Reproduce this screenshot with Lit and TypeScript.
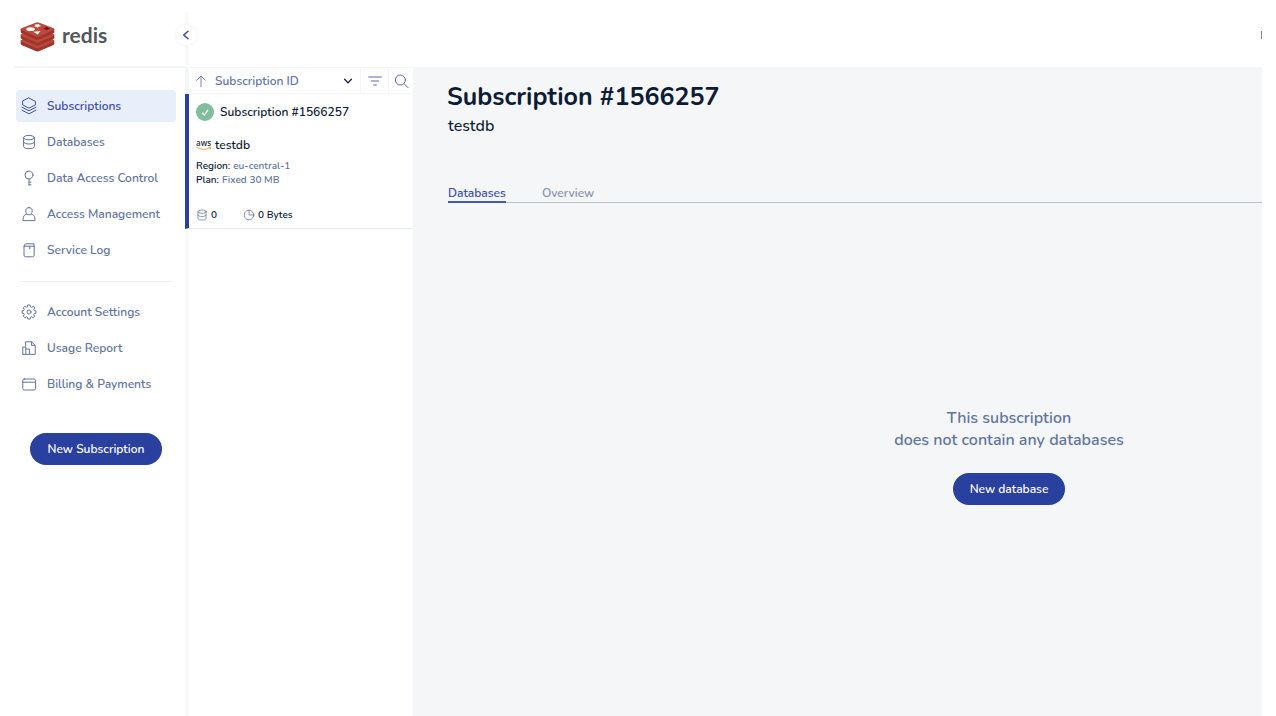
import { LitElement, html, css, svg, TemplateResult } from "lit";
import { customElement, property, state } from "lit/decorators.js";
import { classMap } from "lit/directives/class-map.js";

const icons: Record<string, TemplateResult> = {
  layers: svg`<path d="M8 0 14.4 3.4V6.8L8 10.2 1.6 6.8V3.4Z"/><path d="M1 9.2 8 12.8 15 9.2M1 12.2 8 15.8 15 12.2"/>`,
  database: svg`<ellipse cx="8" cy="3.6" rx="5.4" ry="2.2"/><path d="M2.6 3.6V12.6C2.6 15.4 13.4 15.4 13.4 12.6V3.6M2.6 8C2.6 10.8 13.4 10.8 13.4 8"/>`,
  key: svg`<circle cx="8" cy="5" r="4"/><path d="M8 9V15.2M8 12.2H10M8 14.8H10"/>`,
  user: svg`<path d="M8 1.6C5.8 1.6 4.8 3 4.8 5 4.8 7 6.2 8.9 8 8.9S11.2 7 11.2 5C11.2 3 10.2 1.6 8 1.6ZM5.6 8.2C3 9 2.2 10 2 14.6H14C13.8 10 13 9 10.4 8.2"/>`,
  log: svg`<path d="M3 4.6V13Q3 14.8 4.6 14.8H11.6Q13.2 14.8 13.2 13V4.6Z"/><path d="M3 4.6Q3 1.8 5 1.8H13V4.6M8.8 4.6V6.6"/>`,
  gear: svg`<circle cx="8" cy="8" r="2"/><path d="M6.9 1H9.1L9.7 3.1 10.5 3.4 12.4 2.4 13.9 3.9 12.7 5.6 13.1 6.5 15 6.9V9.1L13.1 9.6 12.7 10.5 13.7 12.3 12.2 13.8 10.5 12.7 9.6 13.1 9.1 15H6.9L6.4 13.1 5.5 12.7 3.8 13.8 2.2 12.2 3.3 10.5 2.9 9.6 1 9.1V6.9L2.9 6.4 3.3 5.5 2.2 3.8 3.8 2.2 5.5 3.3 6.4 2.9Z"/>`,
  report: svg`<path d="M4.6 6V1.8H10.4L14.2 5.4V14.4H9M10.4 1.8V5.4H14.2M1.8 14.4V7H4.8V14.4M4.8 9H8.4V14.4H1.8"/>`,
  card: svg`<rect x="1.8" y="3" width="12.8" height="11" rx="1.6"/><path d="M1.8 6.2H14.6"/>`,
  up: svg`<path d="M8 14.6V2.4M3.2 7.2 8 2.2 12.8 7.2"/>`,
  filter: svg`<path d="M1.6 4H14.4M4.4 8H11.6M6.6 12H9.4"/>`,
  search: svg`<circle cx="7.4" cy="7" r="5"/><path d="M11.2 10.8 15 14.6"/>`,
  pie: svg`<circle cx="8" cy="8" r="6.4"/><path d="M8 1.6V8H14.4"/>`,
  left: svg`<path d="M10.6 3 5 8 10.6 13"/>`,
  down: svg`<path d="M2.6 5.2 8 11 13.4 5.2"/>`,
};

@customElement("line-icon")
class LineIcon extends LitElement {
  @property() name = "";
  static styles = css`
    :host { display: inline-flex; width: 16px; height: 16px; flex: none; }
    svg { width: 100%; height: 100%; overflow: visible; fill: none; stroke: currentColor; stroke-width: var(--stroke, 1); stroke-linejoin: round; stroke-linecap: round; }
  `;
  render() {
    return html`<svg viewBox="0 0 16 16" aria-hidden="true">${icons[this.name]}</svg>`;
  }
}

const primaryNav = [
  ["layers", "Subscriptions"],
  ["database", "Databases"],
  ["key", "Data Access Control"],
  ["user", "Access Management"],
  ["log", "Service Log"],
];
const accountNav = [
  ["gear", "Account Settings"],
  ["report", "Usage Report"],
  ["card", "Billing & Payments"],
];

@customElement("app-root")
class AppRoot extends LitElement {
  @state() private tab = "Databases";

  static styles = css`
    :host {
      --navy: #0d1b36; --slate: #63759c; --blue: #2a409f; --line: #f5f6f8;
      display: block; font-family: Nunito, "Noto Sans", sans-serif; font-size: 12px; font-weight: 600; line-height: 16px; color: var(--navy); background: #fff;
    }
    * { box-sizing: border-box; }
    button, select { font: inherit; color: inherit; border: 0; background: none; padding: 0; margin: 0; cursor: pointer; }
    h1, h2, p, dl, dd, ul { margin: 0; padding: 0; }
    a { color: inherit; text-decoration: none; }
    .shell { display: flex; min-height: 100vh; padding: 12px 14px 0; overflow: hidden; }
    .sidebar { width: 171px; flex: none; }
    .brand { display: flex; align-items: center; gap: 7px; height: 56px; padding: 0 0 5px 6px; border-bottom: 2px solid var(--line); }
    .mark { width: 35px; height: 30px; }
    .word { font-family: Lato, sans-serif; font-size: 21px; line-height: 24px; font-weight: 700; color: #54585b; padding-bottom: 4px; }
    .nav { display: flex; flex-direction: column; gap: 4px; list-style: none; }
    .primary { margin: 22px 9px 0 2px; }
    .account { margin: 14px 9px 0 2px; }
    .link { display: flex; align-items: center; gap: 10px; height: 32px; padding-left: 5px; border-radius: 4px; color: var(--slate); white-space: nowrap; }
    .link.active { background: #e9eefb; color: #3c4fad; }
    .rule { height: 1px; border: 0; background: #eef0f3; margin: 15px 12px 0 6px; }
    .pill { height: 32px; border-radius: 16px; background: var(--blue); color: #fff; white-space: nowrap; padding: 0 17px; }
    .sidebar .pill { display: block; width: 132px; padding: 0; margin: 33px 0 0 16px; }
    .stage { flex: 1; min-width: 0; display: flex; flex-direction: column; }
    .topbar { position: relative; display: flex; align-items: center; justify-content: flex-end; height: 55px; border-left: 4px solid #fafafb; padding-bottom: 9px; }
    .avatar { width: 1px; height: 8px; background: #7d87a8; }
    .collapse { position: absolute; left: -13px; top: 13px; width: 20px; height: 20px; border-radius: 50%; background: #fff; color: #3444b5; box-shadow: 0 0 4px #0000000f; display: grid; place-items: center; }
    .collapse line-icon { width: 12px; height: 12px; --stroke: 2; }
    .columns { flex: 1; display: flex; }
    .list { width: 228px; flex: none; display: flex; flex-direction: column; }
    .tools { display: flex; height: 27px; border: solid var(--line); border-width: 1px 0 1px 4px; color: var(--slate); }
    .sort { width: 24px; display: grid; place-items: center; }
    .sort line-icon { width: 14px; height: 14px; }
    .order { position: relative; flex: 1; display: flex; align-items: center; }
    .order select { appearance: none; width: 100%; height: 24px; padding-left: 2px; }
    .order line-icon { position: absolute; right: 7px; width: 10px; height: 10px; color: var(--navy); --stroke: 2; pointer-events: none; }
    .tool { width: 28px; border-left: 1px solid var(--line); display: grid; place-items: center; color: #5868b9; }
    .tool:last-child { width: 25px; }
    .card { border-left: 4px solid var(--blue); border-bottom: 1px solid #e9ecf0; height: 135px; padding: 9px 7px; display: flex; flex-direction: column; align-items: flex-start; }
    .title { display: flex; align-items: center; gap: 6px; font-size: 12px; line-height: 18px; font-weight: 600; white-space: nowrap; }
    .ok { width: 18px; height: 18px; flex: none; }
    .cloud { display: flex; align-items: center; gap: 3px; margin-top: 16px; }
    .aws { width: 16px; height: 14px; overflow: visible; }
    .aws text { font: 600 8px "Open Sans", sans-serif; fill: #2c3548; }
    .facts { font-size: 10px; line-height: 14px; margin-top: 6px; }
    .facts div { display: flex; gap: 3px; }
    .facts dd { color: var(--slate); }
    .usage { display: flex; gap: 26px; font-size: 10px; margin-top: 20px; }
    .usage span { display: flex; align-items: center; gap: 3px; }
    .usage line-icon { width: 12px; height: 12px; color: var(--slate); }
    .rail { flex: 1; border-left: 4px solid #fafafb; }
    .main { flex: 1; min-width: 0; overflow: hidden; background: #f4f6f8; }
    .sheet { width: calc(100% + 342px); padding: 16px 34px 24px 35px; }
    .heading { font-size: 25px; line-height: 28px; font-weight: 700; margin-left: -1px; white-space: nowrap; }
    .sub { font-size: 16px; font-weight: 500; line-height: 20px; margin-top: 5px; }
    .tabs { display: flex; gap: 36px; margin-top: 48px; border-bottom: 1px solid #b6c1d2; }
    .tab { height: 19px; color: #8593af; border-bottom: 2px solid transparent; margin-bottom: -1px; }
    .tab.on { color: #3c4fad; border-color: #4459b5; }
    .empty { text-align: center; padding-top: 204px; color: var(--slate); }
    .message { font-size: 16px; line-height: 22px; }
    .empty .pill { margin-top: 22px; }
  `;

  private links(items: string[][]) {
    return items.map(([icon, label], i) => html`<li>
      <a href="#" class=${classMap({ link: true, active: items === primaryNav && i === 0 })}><line-icon name=${icon}></line-icon>${label}</a>
    </li>`);
  }

  private redisMark() {
    const slab = (y: number) => svg`<g transform="translate(0 ${y})">
      <path fill="#9c372e" d="M.6 7V10.2Q.6 11 2 11.7L16 17.8Q18 18.7 20 17.8L34 11.7Q35.4 11 35.4 10.2V7Z"/>
      <path fill="#bd473b" d="M2 6 16 .5Q18-.2 20 .5L34 6Q36.6 7.2 34 8.4L20 14.4Q18 15.3 16 14.4L2 8.4Q-.6 7.2 2 6Z"/></g>`;
    return html`<svg class="mark" viewBox="0 0 36 31" role="img" aria-label="Redis logo">
      ${slab(12.2)}${slab(6.2)}${slab(0.2)}
      <g fill="#fff"><ellipse cx="10.8" cy="7.4" rx="4.4" ry="2"/><path d="M15 2.4 17.6 2.7 19.7 1.8 19.6 3.2 22 4.2 19 4.8 17.8 6 16.6 4.8 14 4.4 16 3.6Z"/><path d="M13.6 10.2 21.2 9.3 18.2 12.9Z"/></g>
      <path fill="#6d1915" d="M24 6.6 27.4 5 31 6.6 27.4 8.2Z"/>
    </svg>`;
  }

  render() {
    return html`<div class="shell">
      <aside class="sidebar">
        <div class="brand">${this.redisMark()}<span class="word">redis</span></div>
        <nav>
          <ul class="nav primary">${this.links(primaryNav)}</ul>
          <hr class="rule" />
          <ul class="nav account">${this.links(accountNav)}</ul>
        </nav>
        <button class="pill">New Subscription</button>
      </aside>
      <div class="stage">
        <header class="topbar">
          <button class="collapse" aria-label="Collapse menu"><line-icon name="left"></line-icon></button>
          <span class="avatar"></span>
        </header>
        <div class="columns">
          <section class="list">
            <div class="tools">
              <button class="sort" aria-label="Sort ascending"><line-icon name="up"></line-icon></button>
              <div class="order">
                <select aria-label="Sort by"><option>Subscription ID</option></select>
                <line-icon name="down"></line-icon>
              </div>
              <button class="tool" aria-label="Filter"><line-icon name="filter"></line-icon></button>
              <button class="tool" aria-label="Search"><line-icon name="search"></line-icon></button>
            </div>
            <article class="card">
              <h2 class="title">
                <svg class="ok" viewBox="0 0 18 18" aria-hidden="true"><circle cx="9" cy="9" r="9" fill="#82bd9b"/><path d="M6 9.8 8.4 12 12 6.8" fill="none" stroke="#fff" stroke-width="1.2"/></svg>
                Subscription #1566257
              </h2>
              <div class="cloud">
                <svg class="aws" viewBox="0 0 16 14" aria-hidden="true"><text x="0" y="8">aws</text><path d="M.6 9.2Q7.5 13.2 14 9.8M12.6 9.2 15 9.2 14.4 11.2" fill="none" stroke="#f0a04b" stroke-width="1"/></svg>
                testdb
              </div>
              <dl class="facts">
                <div><dt>Region:</dt><dd>eu-central-1</dd></div>
                <div><dt>Plan:</dt><dd>Fixed 30 MB</dd></div>
              </dl>
              <div class="usage">
                <span><line-icon name="database"></line-icon>0</span>
                <span><line-icon name="pie"></line-icon>0 Bytes</span>
              </div>
            </article>
            <div class="rail"></div>
          </section>
          <main class="main">
            <div class="sheet">
              <h1 class="heading">Subscription #1566257</h1>
              <p class="sub">testdb</p>
              <div class="tabs" role="tablist">
                ${["Databases", "Overview"].map((t) => html`<button role="tab" aria-selected=${t === this.tab ? "true" : "false"} class=${classMap({ tab: true, on: t === this.tab })} @click=${() => (this.tab = t)}>${t}</button>`)}
              </div>
              <div class="empty">
                <p class="message">This subscription<br />does not contain any databases</p>
                <button class="pill">New database</button>
              </div>
            </div>
          </main>
        </div>
      </div>
    </div>`;
  }
}
